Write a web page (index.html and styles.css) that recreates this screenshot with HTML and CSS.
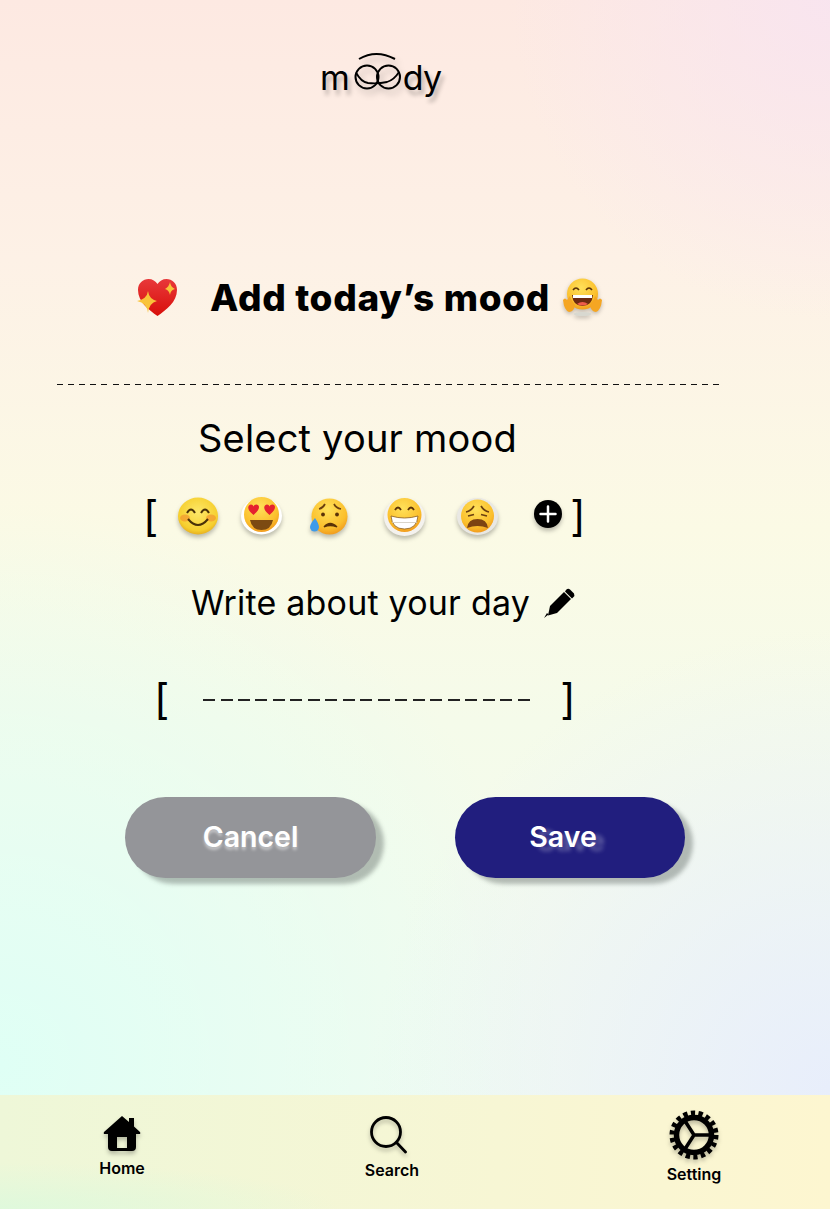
FILE: index.html
```html
<!DOCTYPE html>
<html lang="en">
<head>
    <meta charset="UTF-8">
    <meta name="viewport" content="width=device-width, initial-scale=1.0">
    <title>Moody</title>
    <link rel="stylesheet" href="styles.css">
</head>
<body>
<div class="page">
    <header class="logo">
        <span>m</span>
        <svg class="logo-eyes" width="48" height="38" viewBox="0 0 48 38" fill="none" stroke="#000" stroke-width="2">
            <path d="M5 7 Q22 -3 41 7"/>
            <circle cx="13" cy="25" r="11.5"/>
            <circle cx="34.500" cy="25" r="11.5"/>
            <path d="M2 20.500 Q7 30 14 31 Q24 32 33 30 Q40 28 45 20" stroke-width="1.800"/>
        </svg>
        <span class="logo-end">dy</span>
    </header>

    <main>
        <div class="title-row">
            <svg class="title-heart" width="41" height="39" viewBox="0 0 41 39">
                <defs>
                    <linearGradient id="heartFill" x1="0" y1="0" x2="0" y2="1">
                        <stop offset="0" stop-color="#e8383a"/>
                        <stop offset="1" stop-color="#d80f0a"/>
                    </linearGradient>
                </defs>
                <path d="M20.5 38 C12 32 1 24 1 12 C1 5 6 1 11.5 1 C15.5 1 18.5 3 20.5 6 C22.5 3 25.500 1 29.5 1 C35 1 40 5 40 12 C40 24 29 32 20.5 38 Z" fill="url(#heartFill)"/>
                <path d="M11 13 Q12 21 20 23 Q12 25 11 35 Q10 25 0 23 Q10 21 11 13 Z" fill="#f9c33a"/>
                <path d="M33 4 Q33.500 9 38 11 Q33.500 12 33 17 Q32 12 28 11 Q32 9 33 4 Z" fill="#f9c33a"/>
            </svg>
            <h1>Add today’s mood</h1>
            <svg class="title-hug" width="39" height="38" viewBox="0 0 39 38">
                <defs>
                    <radialGradient id="faceFill" cx="0.45" cy="0.3" r="0.8">
                        <stop offset="0" stop-color="#ffe15a"/>
                        <stop offset="0.65" stop-color="#fbbf2c"/>
                        <stop offset="1" stop-color="#ec8a17"/>
                    </radialGradient>
                </defs>
                <ellipse cx="19.5" cy="36" rx="9" ry="2" fill="#d8d8d0"/>
                <circle cx="19.500" cy="16" r="15.500" fill="url(#faceFill)"/>
                <path d="M10 12 Q13 8 16 12 M23 12 Q26 8 29 12" fill="none" stroke="#5a3208" stroke-width="1.6"/>
                <path d="M9 17 H30 Q29 28 19.500 28 Q10 28 9 17 Z" fill="#6d2a10"/>
                <path d="M10 17 H29 V20 H10 Z" fill="#fff"/>
                <path d="M14 26 Q19.500 22 25 26 Q19.500 29 14 26 Z" fill="#ef5c4b"/>
                <path d="M0 22 Q2 19 4 22 L7 18 L8 21 L12 27 Q11 34 6 34 Q1 32 0 22 Z" fill="#f5a623"/>
                <path d="M39 22 Q37 19 35 22 L32 18 L31 21 L27 27 Q28 34 33 34 Q38 32 39 22 Z" fill="#f5a623"/>
            </svg>
        </div>

        <div class="divider"></div>

        <h2 class="select-title">Select your mood</h2>

        <div class="mood-row">
            <span class="bracket">[</span>
            <svg class="mood mood-smile" width="40" height="38" viewBox="0 0 40 38">
                <defs>
                    <radialGradient id="softFill" cx="0.5" cy="0.4" r="0.65">
                        <stop offset="0" stop-color="#fde86a"/>
                        <stop offset="0.75" stop-color="#f6cf2e"/>
                        <stop offset="1" stop-color="#e0a21a"/>
                    </radialGradient>
                </defs>
                <ellipse cx="20" cy="19" rx="20" ry="18.500" fill="url(#softFill)"/>
                <ellipse cx="7" cy="21" rx="5" ry="3.500" fill="#f2962f" opacity=".7"/>
                <ellipse cx="33" cy="21" rx="5" ry="3.500" fill="#f2962f" opacity=".7"/>
                <path d="M9 16 Q13 9 17 16 M23 16 Q27 9 31 16 M10 22 Q20 34 30 22" fill="none" stroke="#4a3208" stroke-width="2"/>
            </svg>
            <svg class="mood mood-love" width="41" height="38" viewBox="0 0 41 38">
                <ellipse cx="20.500" cy="19" rx="20.500" ry="18.500" fill="#fff"/>
                <circle cx="20.500" cy="17.500" r="17.500" fill="url(#faceFill)"/>
                <path d="M9 23 H32 Q30 33 20.500 33 Q11 33 9 23 Z" fill="#7c4a12"/>
                <path d="M12.500 18 C8 14 6 11 8 8.500 C10 6.500 12 8 12.500 9.500 C13 8 15.500 6.500 17.500 8.500 C19 11 17 14 12.500 18 Z" fill="#e5222f"/>
                <path d="M28.500 18 C24 14 22 11 24 8.500 C26 6.500 28 8 28.500 9.500 C29 8 31.500 6.500 33.500 8.500 C35 11 33 14 28.500 18 Z" fill="#e5222f"/>
            </svg>
            <svg class="mood mood-sad" width="41" height="37" viewBox="0 0 41 37">
                <circle cx="21" cy="18" r="18" fill="url(#faceFill)" transform="translate(-.5 .5)"/>
                <path d="M10 11 Q14 10 16 6 M25 6 Q27 10 32 11" fill="none" stroke="#6b3f10" stroke-width="1.700"/>
                <circle cx="14" cy="16.500" r="1.900" fill="#5a3208"/>
                <circle cx="28" cy="16.500" r="1.900" fill="#5a3208"/>
                <path d="M15 29 Q21 22 28 29 Q21 26 15 29 Z" fill="#5a3208" stroke="#5a3208" stroke-width="1.300"/>
                <path d="M6 20 Q10 26 10 29 A4.500 4.500 0 0 1 1 29 Q1 26 6 20 Z" fill="#3e9be8"/>
            </svg>
            <svg class="mood mood-grin" width="41" height="39" viewBox="0 0 41 39">
                <ellipse cx="20.500" cy="20" rx="20.500" ry="19" fill="#f4f2ee"/>
                <circle cx="20.500" cy="18" r="17" fill="url(#faceFill)"/>
                <path d="M11 13 Q14 8 17 13 M24 13 Q27 8 30 13" fill="none" stroke="#5a3208" stroke-width="1.800"/>
                <path d="M7 19 Q20.500 23 34 19 Q33 32 20.500 32 Q8 32 7 19 Z" fill="#fff" stroke="#8a5a1a" stroke-width=".8"/>
                <path d="M8 25.500 H33" stroke="#cfc9bd" stroke-width=".8"/>
            </svg>
            <svg class="mood mood-weary" width="41" height="37" viewBox="0 0 41 37">
                <ellipse cx="20.500" cy="18.500" rx="20.500" ry="18.500" fill="#e9e8e4"/>
                <circle cx="20.500" cy="18" r="16.500" fill="url(#faceFill)"/>
                <path d="M9 14 Q14 13 17 8 M24 8 Q27 13 32 14 M11 18 L17 16.500 M30 18 L24 16.500" fill="none" stroke="#6b3f10" stroke-width="1.700"/>
                <path d="M10 30 Q11 21 20.500 21 Q30 21 31 30 Q20.500 26 10 30 Z" fill="#7c4212"/>
            </svg>
            <svg class="mood mood-plus" width="28" height="28" viewBox="0 0 28 28">
                <circle cx="14" cy="14" r="14" fill="#000"/>
                <path d="M14 6.500 V21.500 M6.500 14 H21.500" stroke="#fff" stroke-width="2.500" stroke-linecap="round"/>
            </svg>
            <span class="bracket bracket-end">]</span>
        </div>

        <div class="write-row">
            <h3>Write about your day</h3>
            <svg width="31" height="30" viewBox="0 0 31 30" fill="#000">
                <path d="M6 18 L20 4 L27 11 L13 25 L4 27.500 Z"/>
                <path d="M22 2 Q24 0 26 1.500 L30 5.500 Q31 8 29.500 9 L28 10.500 L21 3.500 Z"/>
                <path d="M0 30 L4.500 26.500 L3 25 Z"/>
            </svg>
        </div>

        <div class="note-row">
            <span class="bracket">[</span>
            <div class="note-dashes"></div>
            <span class="bracket">]</span>
        </div>

        <div class="actions">
            <button class="btn btn-cancel">Cancel</button>
            <button class="btn btn-save">Save</button>
        </div>
    </main>

    <nav class="tabbar">
        <div class="tab tab-home">
            <svg width="38" height="38" viewBox="0 0 38 38">
                <path d="M19 1 L26 7 V3 H31 V11.500 L37 17 Q38 19 36 19 H33 V32 Q33 36 29 36 H9 Q5 36 5 32 V19 H2 Q0 19 1 17 Z M14 22 V33 H24 V22 Z" fill="#000" fill-rule="evenodd"/>
            </svg>
            <span>Home</span>
        </div>
        <div class="tab tab-search">
            <svg width="38" height="38" viewBox="0 0 38 38" fill="none" stroke="#000" stroke-width="2.800">
                <circle cx="16" cy="16" r="14.500"/>
                <path d="M26.500 26.500 L35.500 36" stroke-linecap="round"/>
            </svg>
            <span>Search</span>
        </div>
        <div class="tab tab-setting">
            <svg width="50" height="50" viewBox="0 0 50 50" fill="none" stroke="#000">
                <circle cx="25" cy="25" r="22" stroke-width="5" stroke-dasharray="4.300 3.380"/>
                <circle cx="25" cy="25" r="17.500" stroke-width="5.500"/>
                <path d="M25 25 H41 M25 25 L16 11 M25 25 L16 39" stroke-width="3.500"/>
            </svg>
            <span>Setting</span>
        </div>
    </nav>
</div>
</body>
</html>
```

FILE: styles.css
```css
/* Basic reset */
* {
    margin: 0;
    padding: 0;
    box-sizing: border-box;
}

body {
    font-family: Inter, "Noto Sans", sans-serif;
    color: #000;
}

.page {
    width: 830px;
    height: 1209px;
    overflow: hidden;
    display: flex;
    flex-direction: column;
    background:
        radial-gradient(circle at 100% 0, rgba(248, 228, 240, 0.9) 0, rgba(248, 228, 240, 0) 320px),
        radial-gradient(circle at 100% 90%, #e8eefb 0, rgba(232, 238, 251, 0) 460px),
        radial-gradient(circle at 0 88%, #dffff5 0, rgba(223, 255, 245, 0) 560px),
        linear-gradient(180deg, #fde9e2 0, #fdf1e6 260px, #fbfae5 530px, #f5fbea 720px, #f2fbf0 1100px);
}

/* Logo */
.logo {
    display: flex;
    align-items: baseline;
    height: 110px;
    padding: 52px 0 0 320px;
    font-size: 34px;
    line-height: 35px;
    color: #000;
    text-shadow: 3px 5px 4px rgba(0, 0, 0, 0.25);
}

.logo-eyes {
    margin: 0 1px -2px 4px;
    filter: drop-shadow(3px 5px 3px rgba(0, 0, 0, 0.2));
}

.logo-end {
    letter-spacing: -0.8px;
}

/* Heading */
.title-row {
    display: flex;
    align-items: center;
    height: 40px;
    margin-top: 167px;
    padding-left: 137px;
}

.title-row h1 {
    margin-left: 32px;
    font-size: 37px;
    font-weight: 800;
    letter-spacing: 0.65px;
    white-space: nowrap;
}

.title-hug {
    margin-left: 13px;
    filter: drop-shadow(0 2px 2px rgba(0, 0, 0, 0.25));
}

.divider {
    width: 662px;
    height: 1px;
    margin: 67px 0 0 57px;
    background: repeating-linear-gradient(90deg, #111 0, #111 6px, transparent 6px, transparent 11.12px);
}

.select-title {
    margin: 30px 0 0 198px;
    font-size: 38px;
    line-height: 46px;
    font-weight: 400;
    letter-spacing: 0.2px;
}

/* Mood picker */
.mood-row {
    display: flex;
    align-items: center;
    height: 44px;
    margin-top: 33px;
    padding-left: 143px;
}

.bracket {
    font-size: 42px;
    line-height: 44px;
    font-weight: 400;
}

.mood {
    flex: none;
    filter: drop-shadow(0 3px 2px rgba(0, 0, 0, 0.25));
}

.mood-smile { margin-left: 20px; }
.mood-love { margin-left: 23px; }
.mood-sad { margin-left: 27px; }
.mood-grin { margin-left: 34px; }
.mood-weary { margin-left: 32px; }
.mood-plus { margin-left: 36px; margin-bottom: 4px; }
.bracket-end { margin-left: 8px; }

.write-row {
    display: flex;
    align-items: center;
    height: 44px;
    margin-top: 43px;
    padding-left: 191px;
}

.write-row h3 {
    font-size: 34px;
    line-height: 44px;
    font-weight: 400;
    letter-spacing: 0.2px;
    white-space: nowrap;
}

.write-row svg {
    margin-left: 14px;
}

.note-row {
    display: flex;
    align-items: center;
    height: 44px;
    margin-top: 52px;
    padding-left: 154px;
}

.note-dashes {
    width: 328px;
    height: 2px;
    margin: 2px 29px 0 34px;
    background: repeating-linear-gradient(90deg, #222 0, #222 12px, transparent 12px, transparent 17.5px);
}

/* Buttons */
.actions {
    display: flex;
    gap: 79px;
    margin-top: 76px;
    padding-left: 125px;
}

.btn {
    height: 81px;
    padding-bottom: 3px;
    border: none;
    border-radius: 41px;
    font-family: inherit;
    font-size: 28.5px;
    font-weight: 600;
    color: #fff;
    box-shadow: 8px 6px 4px rgba(90, 100, 95, 0.42);
}

.btn-cancel {
    width: 251px;
    background-color: #949599;
    text-shadow: 0 3px 3px rgba(255, 255, 255, 0.45);
}

.btn-save {
    width: 230px;
    padding-right: 14px;
    background-color: #211e7e;
    text-shadow: 8px 4px 4px rgba(255, 255, 255, 0.3);
}

/* Bottom bar */
.tabbar {
    display: flex;
    align-items: flex-start;
    height: 114px;
    margin-top: auto;
    padding-left: 92px;
    background:
        radial-gradient(ellipse at 0 100%, #dff9dc 0, rgba(223, 249, 220, 0) 340px),
        linear-gradient(90deg, #eef7d8 0, #f7f6d4 60%, #fdf6d0 100%);
}

.tab {
    display: flex;
    flex-direction: column;
    align-items: center;
    width: 60px;
    font-size: 16px;
    font-weight: 600;
    white-space: nowrap;
}

.tab svg {
    filter: drop-shadow(0 3px 2px rgba(0, 0, 0, 0.25));
}

.tab-home { padding-top: 20px; }
.tab-home span { margin-top: 5px; }
.tab-search { margin-left: 210px; padding-top: 21px; }
.tab-search span { margin-top: 6px; }
.tab-search svg { margin-right: 6px; }
.tab-setting { margin-left: 242px; padding-top: 15px; }
.tab-setting span { margin-top: 4px; }
```
